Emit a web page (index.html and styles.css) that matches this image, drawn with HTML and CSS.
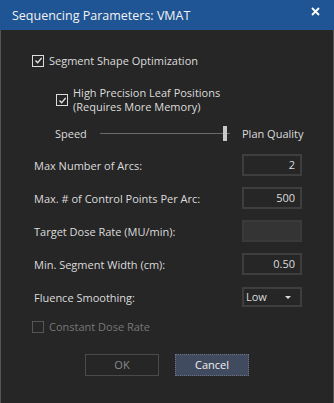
FILE: index.html
```html
<!DOCTYPE html>
<html lang="en">
  <head>
    <meta charset="UTF-8" />
    <title>Sequencing Parameters: VMAT</title>
    <link rel="stylesheet" href="styles.css">
  </head>
  <body>
    <div class="dialog">
      <div class="titlebar">
        <span class="title">Sequencing Parameters: VMAT</span>
        <span class="close">
          <svg width="9" height="9" viewBox="0 0 9 9"><path d="M1 1 L8 8 M8 1 L1 8" stroke="#fff" stroke-width="1.8" /></svg>
        </span>
      </div>
      <div class="content">
        <div class="check check1">
          <span class="box on"><svg width="9" height="9" viewBox="0 0 9 9"><path d="M1.5 4.5 L3.6 6.8 L7.6 2" stroke="#e6e6e6" stroke-width="1.3" fill="none" /></svg></span>
          <span>Segment Shape Optimization</span>
        </div>
        <div class="check check2">
          <span class="box on"><svg width="9" height="9" viewBox="0 0 9 9"><path d="M1.5 4.5 L3.6 6.8 L7.6 2" stroke="#e6e6e6" stroke-width="1.3" fill="none" /></svg></span>
          <span>High Precision Leaf Positions<br>(Requires More Memory)</span>
        </div>
        <div class="slider">
          <span class="speed">Speed</span>
          <span class="track"><span class="thumb"></span></span>
          <span class="quality">Plan Quality</span>
        </div>
        <div class="row first">
          <span>Max Number of Arcs:</span>
          <span class="field">2</span>
        </div>
        <div class="row">
          <span>Max. # of Control Points Per Arc:</span>
          <span class="field">500</span>
        </div>
        <div class="row">
          <span>Target Dose Rate (MU/min):</span>
          <span class="field disabled"></span>
        </div>
        <div class="row">
          <span>Min. Segment Width (cm):</span>
          <span class="field">0.50</span>
        </div>
        <div class="row">
          <span>Fluence Smoothing:</span>
          <span class="field select"><span>Low</span><span class="arrow"></span></span>
        </div>
        <div class="check check3">
          <span class="box off"></span>
          <span>Constant Dose Rate</span>
        </div>
        <div class="buttons">
          <span class="btn ok">OK</span>
          <span class="btn cancel">Cancel</span>
        </div>
      </div>
    </div>
  </body>
</html>
```

FILE: styles.css
```css
body {
  margin: 0;
  background: #262626;
  font-family: "Open Sans", "Noto Sans", sans-serif;
  font-size: 11px;
  color: #dcdcdc;
}
.dialog {
  width: 334px;
  height: 403px;
  box-sizing: border-box;
  border-left: 1px solid #555;
  border-right: 1px solid #555;
  background: #262626;
}
.titlebar {
  height: 30px;
  background: #1f5594;
  display: flex;
  align-items: center;
  justify-content: space-between;
  padding: 0 13px 0 12px;
  margin: 0 -1px;
}
.title {
  font-size: 12.5px;
  color: #f2f2f2;
  margin-top: 1px;
}
.close {
  display: flex;
  margin-top: -8px;
  margin-right: 1px;
}
.content {
  padding: 0 31px;
}
.check {
  display: flex;
  align-items: center;
  gap: 5px;
}
.box {
  width: 10px;
  height: 10px;
  border: 1px solid #dcdcdc;
  display: flex;
  align-items: center;
  justify-content: center;
}
.box.off {
  border-color: #555;
}
.check1 {
  margin-top: 24px;
  height: 13px;
}
.check2 {
  margin: 19px 0 0 24px;
  line-height: 14px;
}
.check3 {
  margin-top: 12px;
  height: 13px;
  color: #777;
}
.slider {
  display: flex;
  align-items: center;
  height: 16px;
  margin: 11px 0 0 23px;
  white-space: nowrap;
}
.speed {
  width: 45px;
  flex-shrink: 0;
}
.track {
  width: 130px;
  height: 1px;
  background: #6a6a6a;
  position: relative;
  flex-shrink: 0;
}
.thumb {
  position: absolute;
  left: 123px;
  top: -7px;
  width: 4px;
  height: 15px;
  background: #c8c8c8;
}
.quality {
  margin-left: 12px;
}
.row {
  display: flex;
  align-items: center;
  justify-content: space-between;
  height: 22px;
  margin-top: 11px;
  padding-left: 2px;
}
.row.first {
  margin-top: 13px;
}
.field {
  width: 51px;
  height: 18px;
  border: 2px solid #3e3e3e;
  text-align: right;
  padding-right: 5px;
  line-height: 18px;
}
.field.disabled {
  width: 56px;
  padding-right: 0;
  background: #343434;
  border-color: #3a3a3a;
}
.field.select {
  display: flex;
  align-items: center;
  justify-content: space-between;
  text-align: left;
  height: 16px;
  width: 54px;
  padding: 0 0 0 2px;
}
.arrow {
  width: 0;
  height: 0;
  border-left: 3px solid transparent;
  border-right: 3px solid transparent;
  border-top: 3px solid #dcdcdc;
  margin-right: 9px;
}
.buttons {
  display: flex;
  justify-content: center;
  gap: 16px;
  margin-top: 21px;
}
.btn {
  width: 72px;
  height: 20px;
  line-height: 20px;
  text-align: center;
}
.btn.ok {
  border: 1px solid #4a4a4a;
  color: #8a8a8a;
}
.btn.cancel {
  background: #414b60;
  border: 1px dotted #6a7080;
  color: #f0f0f0;
}
```
